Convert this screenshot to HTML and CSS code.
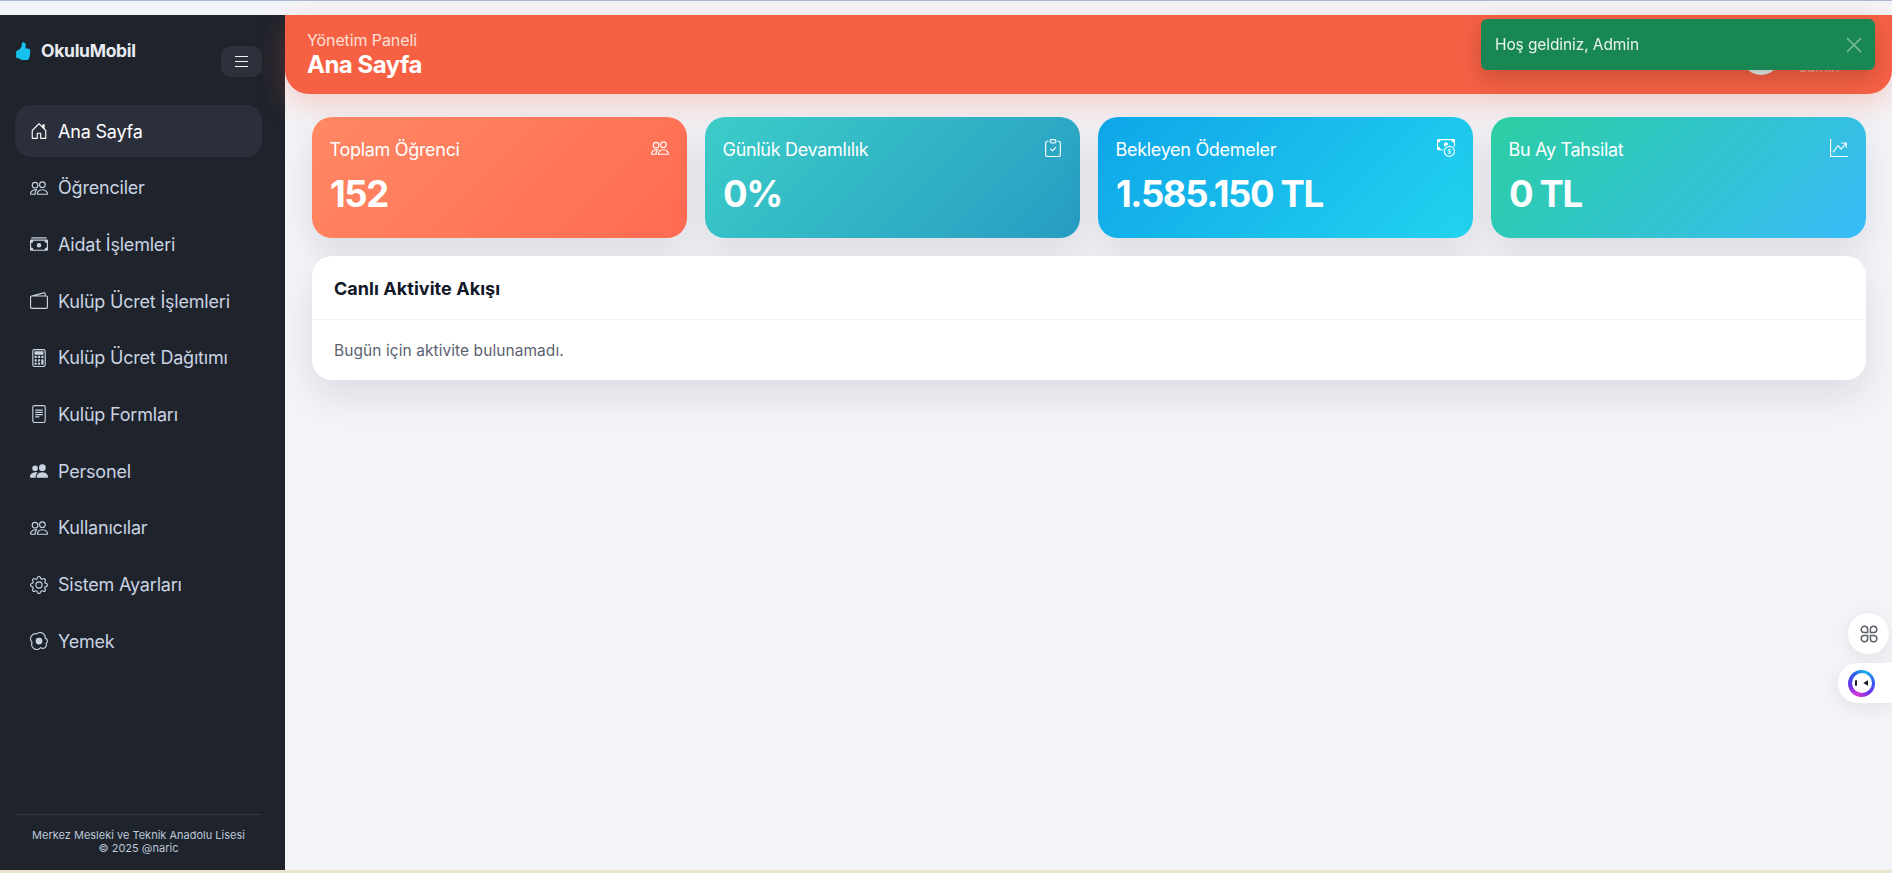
FILE: index.html
```html
<!DOCTYPE html>
<html lang="tr">
<head>
<meta charset="utf-8">
<title>OkuluMobil</title>
<link rel="stylesheet" href="styles.css">
</head>
<body>
<svg class="defs" width="0" height="0" aria-hidden="true">
  <defs>
    <symbol id="i-people" viewBox="0 0 16 16">
      <path d="M15 14s1 0 1-1-1-4-5-4-5 3-5 4 1 1 1 1zm-7.978-1L7 12.996c.001-.264.167-1.03.76-1.72C8.312 10.629 9.282 10 11 10c1.717 0 2.687.63 3.24 1.276.593.69.758 1.457.76 1.72l-.008.002-.014.002zM11 7a2 2 0 1 0 0-4 2 2 0 0 0 0 4m3-2a3 3 0 1 1-6 0 3 3 0 0 1 6 0M6.936 9.28a6 6 0 0 0-1.23-.247A7 7 0 0 0 5 9c-4 0-5 3-5 4q0 1 1 1h4.216A2.24 2.24 0 0 1 5 13c0-1.01.377-2.042 1.09-2.904.243-.294.526-.569.846-.816M4.92 10A5.5 5.5 0 0 0 4 13H1c0-.26.164-1.03.76-1.724.545-.636 1.492-1.256 3.16-1.275ZM1.5 5.5a3 3 0 1 1 6 0 3 3 0 0 1-6 0m3-2a2 2 0 1 0 0 4 2 2 0 0 0 0-4"/>
    </symbol>
  </defs>
</svg>
<div class="topstrip"></div>
<div class="app">
  <aside class="sidebar">
    <div class="brand">
      <div class="logo">
        <svg class="thumb" viewBox="2 0 13 16"><path d="M6.956 1.745C7.021.81 7.908.087 8.864.325l.261.066c.463.116.874.456 1.012.965.22.816.533 2.511.062 4.51a10 10 0 0 1 .443-.051c.713-.065 1.669-.072 2.516.21.518.173.994.681 1.2 1.273.184.532.16 1.162-.234 1.733q.086.18.138.363c.077.27.113.567.113.856s-.036.586-.113.856c-.039.135-.09.273-.16.404.169.387.107.819-.003 1.148a3.2 3.2 0 0 1-.488.901c.054.152.076.312.076.465 0 .305-.089.625-.253.912C13.1 15.522 12.437 16 11.5 16H8c-.605 0-1.07-.081-1.466-.218a4.8 4.8 0 0 1-.97-.484l-.048-.03c-.504-.307-.999-.609-2.068-.722C2.682 14.464 2 13.846 2 13V9c0-.85.685-1.432 1.357-1.615.849-.232 1.574-.787 2.132-1.41.56-.627.914-1.28 1.039-1.639.199-.575.356-1.539.428-2.59z"/></svg>
        <span class="logo-text">OkuluMobil</span>
      </div>
      <button class="toggle" type="button" aria-label="Menü">
        <span></span><span></span><span></span>
      </button>
    </div>
    <nav class="nav">
      <a class="nav-item active">
        <svg class="ic" viewBox="0 0 16 16"><path d="M8.354 1.146a.5.5 0 0 0-.708 0l-6 6A.5.5 0 0 0 1.5 7.5v7a.5.5 0 0 0 .5.5h4.5a.5.5 0 0 0 .5-.5v-4h2v4a.5.5 0 0 0 .5.5H14a.5.5 0 0 0 .5-.5v-7a.5.5 0 0 0-.146-.354L13 5.793V2.5a.5.5 0 0 0-.5-.5h-1a.5.5 0 0 0-.5.5v1.293zM2.5 14V7.707l5.5-5.5 5.5 5.5V14H10v-4a.5.5 0 0 0-.5-.5h-3a.5.5 0 0 0-.5.5v4z"/></svg>
        <span>Ana Sayfa</span>
      </a>
      <a class="nav-item">
        <svg class="ic"><use href="#i-people"/></svg>
        <span>Öğrenciler</span>
      </a>
      <a class="nav-item">
        <svg class="ic" viewBox="0 0 16 16"><path d="M1 3a1 1 0 0 1 1-1h12a1 1 0 0 1 1 1zm7 8a2 2 0 1 0 0-4 2 2 0 0 0 0 4"/><path d="M0 5a1 1 0 0 1 1-1h14a1 1 0 0 1 1 1v8a1 1 0 0 1-1 1H1a1 1 0 0 1-1-1zm3 0a2 2 0 0 1-2 2v4a2 2 0 0 1 2 2h10a2 2 0 0 1 2-2V7a2 2 0 0 1-2-2z"/></svg>
        <span>Aidat İşlemleri</span>
      </a>
      <a class="nav-item">
        <svg class="ic" viewBox="0 0 16 16"><path d="M12.136.326A1.5 1.5 0 0 1 14 1.78V3h.5A1.5 1.5 0 0 1 16 4.5v9a1.5 1.5 0 0 1-1.5 1.5h-13A1.5 1.5 0 0 1 0 13.5v-9a1.5 1.5 0 0 1 1.432-1.499zM5.562 3H13V1.78a.5.5 0 0 0-.621-.484zM1.5 4a.5.5 0 0 0-.5.5v9a.5.5 0 0 0 .5.5h13a.5.5 0 0 0 .5-.5v-9a.5.5 0 0 0-.5-.5z"/></svg>
        <span>Kulüp Ücret İşlemleri</span>
      </a>
      <a class="nav-item">
        <svg class="ic" viewBox="0 0 16 16"><path d="M12 1a1 1 0 0 1 1 1v12a1 1 0 0 1-1 1H4a1 1 0 0 1-1-1V2a1 1 0 0 1 1-1zM4 0a2 2 0 0 0-2 2v12a2 2 0 0 0 2 2h8a2 2 0 0 0 2-2V2a2 2 0 0 0-2-2z"/><path d="M4 2.5a.5.5 0 0 1 .5-.5h7a.5.5 0 0 1 .5.5v2a.5.5 0 0 1-.5.5h-7a.5.5 0 0 1-.5-.5zm0 4a.5.5 0 0 1 .5-.5h1a.5.5 0 0 1 .5.5v1a.5.5 0 0 1-.5.5h-1a.5.5 0 0 1-.5-.5zm0 3a.5.5 0 0 1 .5-.5h1a.5.5 0 0 1 .5.5v1a.5.5 0 0 1-.5.5h-1a.5.5 0 0 1-.5-.5zm0 3a.5.5 0 0 1 .5-.5h1a.5.5 0 0 1 .5.5v1a.5.5 0 0 1-.5.5h-1a.5.5 0 0 1-.5-.5zm3-6a.5.5 0 0 1 .5-.5h1a.5.5 0 0 1 .5.5v1a.5.5 0 0 1-.5.5h-1a.5.5 0 0 1-.5-.5zm0 3a.5.5 0 0 1 .5-.5h1a.5.5 0 0 1 .5.5v1a.5.5 0 0 1-.5.5h-1a.5.5 0 0 1-.5-.5zm0 3a.5.5 0 0 1 .5-.5h1a.5.5 0 0 1 .5.5v1a.5.5 0 0 1-.5.5h-1a.5.5 0 0 1-.5-.5zm3-6a.5.5 0 0 1 .5-.5h1a.5.5 0 0 1 .5.5v1a.5.5 0 0 1-.5.5h-1a.5.5 0 0 1-.5-.5zm0 3a.5.5 0 0 1 .5-.5h1a.5.5 0 0 1 .5.5v4a.5.5 0 0 1-.5.5h-1a.5.5 0 0 1-.5-.5z"/></svg>
        <span>Kulüp Ücret Dağıtımı</span>
      </a>
      <a class="nav-item">
        <svg class="ic" viewBox="0 0 16 16"><path d="M5 4a.5.5 0 0 0 0 1h6a.5.5 0 0 0 0-1zm-.5 2.5A.5.5 0 0 1 5 6h6a.5.5 0 0 1 0 1H5a.5.5 0 0 1-.5-.5M5 8a.5.5 0 0 0 0 1h6a.5.5 0 0 0 0-1zm0 2a.5.5 0 0 0 0 1h3a.5.5 0 0 0 0-1z"/><path d="M2 2a2 2 0 0 1 2-2h8a2 2 0 0 1 2 2v12a2 2 0 0 1-2 2H4a2 2 0 0 1-2-2zm10-1H4a1 1 0 0 0-1 1v12a1 1 0 0 0 1 1h8a1 1 0 0 0 1-1V2a1 1 0 0 0-1-1"/></svg>
        <span>Kulüp Formları</span>
      </a>
      <a class="nav-item">
        <svg class="ic" viewBox="0 0 16 16"><path d="M7 14s-1 0-1-1 1-4 5-4 5 3 5 4-1 1-1 1zm4-6a3 3 0 1 0 0-6 3 3 0 0 0 0 6m-5.784 6A2.24 2.24 0 0 1 5 13c0-1.355.68-2.75 1.936-3.72A6.3 6.3 0 0 0 5 9c-4 0-5 3-5 4s1 1 1 1zM4.5 8a2.5 2.5 0 1 0 0-5 2.5 2.5 0 0 0 0 5"/></svg>
        <span>Personel</span>
      </a>
      <a class="nav-item">
        <svg class="ic"><use href="#i-people"/></svg>
        <span>Kullanıcılar</span>
      </a>
      <a class="nav-item">
        <svg class="ic" viewBox="0 0 16 16"><path d="M8 4.754a3.246 3.246 0 1 0 0 6.492 3.246 3.246 0 0 0 0-6.492M5.754 8a2.246 2.246 0 1 1 4.492 0 2.246 2.246 0 0 1-4.492 0"/><path d="M9.796 1.343c-.527-1.79-3.065-1.79-3.592 0l-.094.319a.873.873 0 0 1-1.255.52l-.292-.16c-1.64-.892-3.433.902-2.54 2.541l.159.292a.873.873 0 0 1-.52 1.255l-.319.094c-1.79.527-1.79 3.065 0 3.592l.319.094a.873.873 0 0 1 .52 1.255l-.16.292c-.892 1.64.901 3.434 2.541 2.54l.292-.159a.873.873 0 0 1 1.255.52l.094.319c.527 1.79 3.065 1.79 3.592 0l.094-.319a.873.873 0 0 1 1.255-.52l.292.16c1.64.893 3.434-.902 2.54-2.541l-.159-.292a.873.873 0 0 1 .52-1.255l.319-.094c1.79-.527 1.79-3.065 0-3.592l-.319-.094a.873.873 0 0 1-.52-1.255l.16-.292c.893-1.64-.902-3.433-2.541-2.54l-.292.159a.873.873 0 0 1-1.255-.52zm-2.633.283c.246-.835 1.428-.835 1.674 0l.094.319a1.873 1.873 0 0 0 2.693 1.115l.291-.16c.764-.415 1.6.42 1.184 1.185l-.159.292a1.873 1.873 0 0 0 1.116 2.692l.318.094c.835.246.835 1.428 0 1.674l-.319.094a1.873 1.873 0 0 0-1.115 2.693l.16.291c.415.764-.42 1.6-1.185 1.184l-.291-.159a1.873 1.873 0 0 0-2.693 1.116l-.094.318c-.246.835-1.428.835-1.674 0l-.094-.319a1.873 1.873 0 0 0-2.692-1.115l-.292.16c-.764.415-1.6-.42-1.184-1.185l.159-.291A1.873 1.873 0 0 0 1.945 8.93l-.319-.094c-.835-.246-.835-1.428 0-1.674l.319-.094A1.873 1.873 0 0 0 3.06 4.377l-.16-.292c-.415-.764.42-1.6 1.185-1.184l.292.159a1.873 1.873 0 0 0 2.692-1.115z"/></svg>
        <span>Sistem Ayarları</span>
      </a>
      <a class="nav-item">
        <svg class="ic" viewBox="0 0 16 16"><path d="M8 11a3 3 0 1 0 0-6 3 3 0 0 0 0 6"/><path d="M13.997 5.17a5 5 0 0 0-8.101-4.09A5 5 0 0 0 1.28 9.342a5 5 0 0 0 8.336 5.109 3.5 3.5 0 0 0 5.201-4.065 3.001 3.001 0 0 0-.822-5.216zm-1-.034a1 1 0 0 0 .668.977 2.001 2.001 0 0 1 .547 3.478 1 1 0 0 0-.341 1.113 2.5 2.5 0 0 1-3.715 2.905 1 1 0 0 0-1.262.152 4 4 0 0 1-6.67-4.087 1 1 0 0 0-.2-1 4 4 0 0 1 3.693-6.61 1 1 0 0 0 .8-.2 4 4 0 0 1 6.48 3.273z"/></svg>
        <span>Yemek</span>
      </a>
    </nav>
    <footer class="side-foot">
      <div>Merkez Mesleki ve Teknik Anadolu Lisesi</div>
      <div>© 2025 @naric</div>
    </footer>
  </aside>
  <div class="content">
    <header class="topbar">
      <div class="titles">
        <div class="subtitle">Yönetim Paneli</div>
        <h1 class="title">Ana Sayfa</h1>
      </div>
      <div class="user">
        <div class="avatar"></div>
        <div class="user-text">
          <div class="user-name">Admin</div>
          <div class="user-role">admin</div>
        </div>
      </div>
    </header>
    <main class="main">
      <section class="stats">
        <article class="stat stat-a">
          <div class="stat-head"><span>Toplam Öğrenci</span><svg class="ic stat-icon"><use href="#i-people"/></svg></div>
          <div class="stat-value">152</div>
        </article>
        <article class="stat stat-b">
          <div class="stat-head"><span>Günlük Devamlılık</span>
            <svg class="ic stat-icon" viewBox="0 0 16 16"><path d="M10.854 7.146a.5.5 0 0 1 0 .708l-3 3a.5.5 0 0 1-.708 0l-1.5-1.5a.5.5 0 1 1 .708-.708L7.5 9.793l2.646-2.647a.5.5 0 0 1 .708 0"/><path d="M4 1.5H3a2 2 0 0 0-2 2V14a2 2 0 0 0 2 2h10a2 2 0 0 0 2-2V3.5a2 2 0 0 0-2-2h-1v1h1a1 1 0 0 1 1 1V14a1 1 0 0 1-1 1H3a1 1 0 0 1-1-1V3.5a1 1 0 0 1 1-1h1z"/><path d="M9.5 1a.5.5 0 0 1 .5.5v1a.5.5 0 0 1-.5.5h-3a.5.5 0 0 1-.5-.5v-1a.5.5 0 0 1 .5-.5zm-3-1A1.5 1.5 0 0 0 5 1.5v1A1.5 1.5 0 0 0 6.5 4h3A1.5 1.5 0 0 0 11 2.5v-1A1.5 1.5 0 0 0 9.5 0z"/></svg>
          </div>
          <div class="stat-value">0%</div>
        </article>
        <article class="stat stat-c">
          <div class="stat-head"><span>Bekleyen Ödemeler</span>
            <svg class="ic stat-icon" viewBox="0 0 16 16"><path fill-rule="evenodd" d="M11 15a4 4 0 1 0 0-8 4 4 0 0 0 0 8m5-4a5 5 0 1 1-10 0 5 5 0 0 1 10 0"/><path d="M9.438 11.944c.047.596.518 1.06 1.363 1.116v.44h.375v-.443c.875-.061 1.386-.529 1.386-1.207 0-.618-.39-.936-1.09-1.1l-.296-.07v-1.2c.376.043.614.248.671.532h.658c-.047-.575-.54-1.024-1.329-1.073V8.5h-.375v.45c-.747.073-1.255.522-1.255 1.158 0 .562.378.92 1.007 1.066l.248.061v1.272c-.384-.058-.639-.27-.696-.563h-.668zm1.36-1.354c-.369-.085-.569-.26-.569-.522 0-.294.216-.514.572-.578v1.1zm.432.746c.449.104.655.272.655.569 0 .339-.257.571-.709.614v-1.195z"/><path d="M1 0a1 1 0 0 0-1 1v8a1 1 0 0 0 1 1h4.083q.088-.517.258-1H3a2 2 0 0 0-2-2V3a2 2 0 0 0 2-2h10a2 2 0 0 0 2 2v3.528c.38.34.717.728 1 1.154V1a1 1 0 0 0-1-1z"/><path d="M9.998 5.083 10 5a2 2 0 1 0-3.132 1.65 6 6 0 0 1 3.13-1.567"/></svg>
          </div>
          <div class="stat-value">1.585.150 TL</div>
        </article>
        <article class="stat stat-d">
          <div class="stat-head"><span>Bu Ay Tahsilat</span>
            <svg class="ic stat-icon" viewBox="0 0 16 16"><path fill-rule="evenodd" d="M0 0h1v15h15v1H0zm10 3.5a.5.5 0 0 1 .5-.5h4a.5.5 0 0 1 .5.5v4a.5.5 0 0 1-1 0V4.9l-3.613 4.417a.5.5 0 0 1-.74.037L7.06 6.767l-3.656 5.027a.5.5 0 0 1-.808-.588l4-5.5a.5.5 0 0 1 .758-.06l2.609 2.61L13.445 4H10.5a.5.5 0 0 1-.5-.5"/></svg>
          </div>
          <div class="stat-value">0 TL</div>
        </article>
      </section>
      <section class="panel">
        <div class="panel-head">Canlı Aktivite Akışı</div>
        <div class="panel-body">Bugün için aktivite bulunamadı.</div>
      </section>
    </main>
  </div>
</div>
<div class="bottomstrip"></div>

<div class="toast">
  <span>Hoş geldiniz, Admin</span>
  <svg class="toast-x" viewBox="0 0 16 16"><path d="M1 1L15 15M15 1L1 15"/></svg>
</div>

<button class="float-round" type="button" aria-label="Uygulamalar">
  <svg viewBox="0 0 18 18"><path d="M4.6 1.2C6.4 1.2 7.6 2.4 7.6 4.2V7.6H4.2C2.4 7.6 1.2 6.4 1.2 4.6C1.2 2.7 2.7 1.2 4.6 1.2Z"/><path d="M13.4 1.2C15.3 1.2 16.8 2.7 16.8 4.6C16.8 6.4 15.6 7.6 13.8 7.6H10.4V4.2C10.4 2.4 11.6 1.2 13.4 1.2Z"/><path d="M4.2 10.4H7.6V13.8C7.6 15.6 6.4 16.8 4.6 16.8C2.7 16.8 1.2 15.3 1.2 13.4C1.2 11.6 2.4 10.4 4.2 10.4Z"/><path d="M10.4 10.4H13.8C15.6 10.4 16.8 11.6 16.8 13.4C16.8 15.3 15.3 16.8 13.4 16.8C11.6 16.8 10.4 15.6 10.4 13.8Z"/></svg>
</button>
<button class="float-pill" type="button" aria-label="Asistan">
  <span class="bot"><span class="bot-face"><i class="bot-eye"></i><i class="bot-beak"></i></span></span>
</button>
</body>
</html>
```
FILE: styles.css
```css
* { box-sizing: border-box; }
html, body { margin: 0; height: 100%; overflow: hidden; }
body {
  font-family: "Inter", "Liberation Sans", sans-serif;
  background: #f3f4f8;
  display: flex;
  flex-direction: column;
  height: 873px;
  color: #111827;
}
.defs { position: absolute; }
.topstrip {
  height: 15px;
  flex: none;
  background: #f3f4f8;
  border-top: 1px solid #a9b9d6;
}
.bottomstrip {
  height: 3px;
  flex: none;
  background: #e9e3cf;
}
.app { flex: 1; display: flex; min-height: 0; }
.ic { width: 18px; height: 18px; flex: none; fill: currentColor; }

/* sidebar */
.sidebar {
  width: 285px;
  flex: none;
  background: #1f232c;
  display: flex;
  flex-direction: column;
  padding: 0 23px 0 15px;
}
.brand {
  display: flex;
  justify-content: space-between;
  align-items: flex-start;
  padding: 26px 0 0 1px;
  height: 90px;
}
.logo { display: flex; align-items: center; gap: 10px; height: 20px; }
.thumb { width: 15px; height: 18px; fill: #17c3ee; }
.logo-text { font-size: 17.5px; font-weight: 700; color: #e8ebf1; letter-spacing: -.3px; position: relative; top: -1px; }
.toggle {
  width: 41px;
  height: 31px;
  margin-top: 5px;
  border: 0;
  border-radius: 10px;
  background: #2d313b;
  display: flex;
  flex-direction: column;
  align-items: center;
  justify-content: center;
  gap: 3.5px;
  padding: 0;
}
.toggle span { width: 13px; height: 1.2px; background: #f1f3f7; }
.nav { display: flex; flex-direction: column; gap: 4.7px; }
.nav-item {
  height: 52px;
  display: flex;
  align-items: center;
  gap: 10px;
  padding: 0 15px;
  border-radius: 16px;
  font-size: 18px;
  letter-spacing: -.2px;
  color: #c9d3e2;
}
.nav-item.active { background: #2a2f3b; color: #fff; }
.side-foot {
  margin-top: auto;
  height: 56px;
  border-top: 1px solid #333846;
  padding-top: 14px;
  text-align: center;
  font-size: 11px;
  line-height: 13px;
  color: #bcc8d8;
}

/* right side */
.content { flex: 1; min-width: 0; display: flex; flex-direction: column; }
.topbar {
  height: 79px;
  flex: none;
  background: linear-gradient(90deg, #f66144, #f66145);
  border-radius: 0 0 24px 24px;
  box-shadow: 0 12px 30px rgba(249, 100, 69, .25);
  padding: 0 0 0 22px;
  display: flex;
  align-items: center;
  justify-content: space-between;
  color: #fff;
}
.subtitle { font-size: 16px; line-height: 20px; letter-spacing: -.1px; color: #ffe0d6; }
.title { margin: 0; font-size: 24px; line-height: 29px; font-weight: 700; letter-spacing: -.5px; }
.user { display: flex; align-items: center; gap: 19px; padding-right: 51px; margin-top: 3px; }
.avatar { width: 38px; height: 38px; border-radius: 50%; background: #e7ecea; }
.user-text { font-size: 14px; line-height: 18px; color: #f9a08d; margin-top: 4px; }
.user-name { color: #fde3db; }

.main { padding: 23px 26px 0 27px; display: flex; flex-direction: column; gap: 18px; }
.stats { display: grid; grid-template-columns: repeat(4, 1fr); gap: 18px; }
.stat {
  height: 121px;
  border-radius: 20px;
  padding: 20px 18px 0;
  color: #fff;
  box-shadow: 0 16px 36px rgba(17, 24, 39, .1);
}
.stat-a { background: linear-gradient(135deg, #ff8863, #ff6b52); }
.stat-b { background: linear-gradient(135deg, #3ccdc8, #279cc3); }
.stat-c { background: linear-gradient(135deg, #0ea5e9, #22d3ee); }
.stat-d { background: linear-gradient(135deg, #2ccea2, #38bbf8); }
.stat-head {
  display: flex;
  justify-content: space-between;
  align-items: flex-start;
  font-size: 18px;
  line-height: 25px;
  letter-spacing: -.3px;
}
.stat-head span { margin-left: -.5px; }
.stat-icon { margin-top: 2px; }
.stat-value { margin-top: 9px; font-size: 36.5px; line-height: 46px; font-weight: 700; letter-spacing: -1.4px; }

.panel {
  background: #fff;
  border-radius: 20px;
  height: 124px;
  box-shadow: 0 16px 36px rgba(17, 24, 39, .1);
}
.panel-head {
  height: 64px;
  border-bottom: 1px solid #f0f1f5;
  padding: 2px 22px 0;
  display: flex;
  align-items: center;
  font-size: 18px;
  font-weight: 700;
  letter-spacing: .05px;
  color: #111827;
}
.panel-body { padding: 21px 22px 0; font-size: 15.5px; line-height: 20px; letter-spacing: .07px; color: #5b6270; }

/* overlays */
.toast {
  position: fixed;
  left: 1481px;
  top: 19px;
  width: 394px;
  height: 51px;
  border-radius: 6px;
  background: #198754;
  box-shadow: 0 8px 24px rgba(0, 0, 0, .2);
  display: flex;
  align-items: center;
  justify-content: space-between;
  padding: 0 13px 0 14px;
  font-size: 15.5px;
  letter-spacing: -.1px;
  color: #e9f4ee;
}
.toast-x { width: 16px; height: 16px; fill: none; stroke: #7ebb9d; stroke-width: 1.6; }
.float-round {
  position: fixed;
  left: 1848px;
  top: 613px;
  width: 41px;
  height: 41px;
  border: 0;
  border-radius: 50%;
  background: #fff;
  box-shadow: 0 4px 18px rgba(17, 24, 39, .08);
  display: flex;
  align-items: center;
  justify-content: center;
  padding: 0;
}
.float-round svg { width: 18px; height: 18px; fill: none; stroke: #5c6068; stroke-width: 1.5; }
.float-pill {
  position: fixed;
  left: 1838px;
  top: 663px;
  width: 54px;
  height: 40px;
  border: 0;
  border-radius: 20px 0 0 20px;
  background: #fff;
  box-shadow: 0 4px 18px rgba(17, 24, 39, .08);
  padding: 0 0 0 10px;
  display: flex;
  align-items: center;
}
.bot {
  width: 27px;
  height: 27px;
  border-radius: 50%;
  background: conic-gradient(from 200deg, #d636d8, #6a35e8, #2f5bf0, #18b5ef, #2f5bf0, #6a35e8, #d636d8);
  display: flex;
  align-items: center;
  justify-content: center;
}
.bot-face {
  width: 20px;
  height: 20px;
  border-radius: 50%;
  background: #fff;
  display: flex;
  align-items: center;
  justify-content: center;
  gap: 6px;
}
.bot-eye { width: 2.5px; height: 6px; background: #1c1f2a; border-radius: 1px; }
.bot-beak { width: 5px; height: 6px; background: #1c1f2a; clip-path: polygon(100% 0, 0 50%, 100% 100%); }
```
